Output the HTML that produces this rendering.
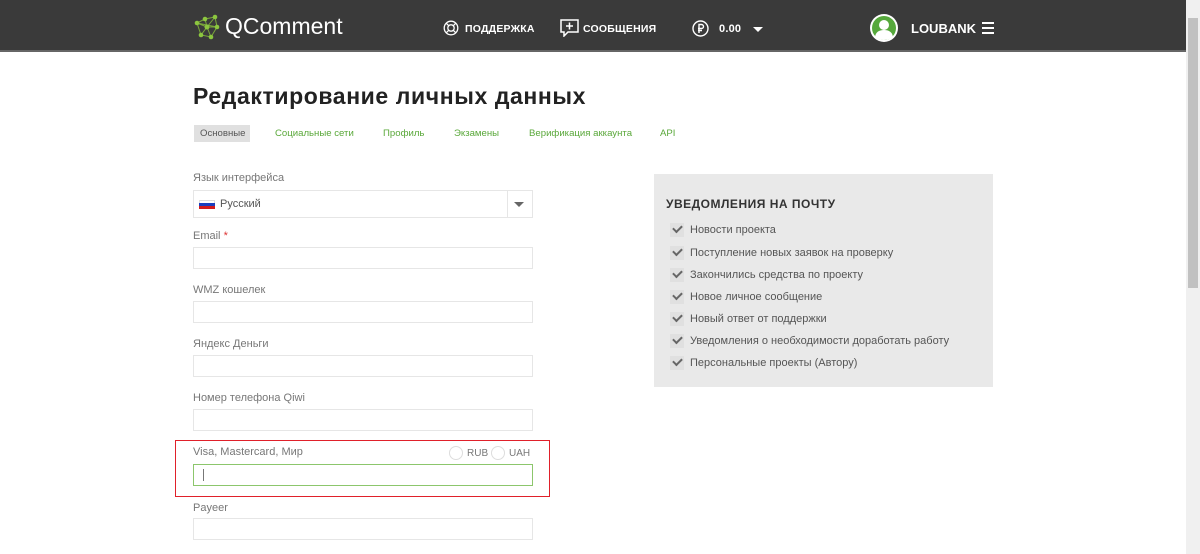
<!DOCTYPE html>
<html><head><meta charset="utf-8"><style>
*{box-sizing:border-box;margin:0;padding:0}
body{width:1200px;height:554px;overflow:hidden;background:#fff;font-family:"Liberation Sans","DejaVu Sans",sans-serif;position:relative}
.hdr{position:absolute;left:0;top:0;width:1186px;height:52px;background:#3a3a3a;border-bottom:2px solid #666}
.a{position:absolute}
.nav{color:#fff;font-weight:bold;font-size:11px;letter-spacing:.2px}
.lbl{position:absolute;left:193px;font-size:11px;color:#777}
.inp{position:absolute;left:193px;width:340px;height:22px;border:1px solid #e6e6e6;background:#fff}
.tab{position:absolute;top:128px;font-size:9.6px;color:#5aa83a}
.chk{position:absolute;left:670px;font-size:11px;color:#555}
.chk i{position:absolute;left:0;top:-1px;width:14px;height:14px;background:#e0e0e0}
.chk i:after{content:"";position:absolute;left:3px;top:2px;width:7px;height:4px;border-left:2px solid #666;border-bottom:2px solid #666;transform:rotate(-45deg)}
.chk span{position:absolute;left:20px;white-space:nowrap}
</style></head><body>
<div class="hdr"></div>
<svg class="a" style="left:193px;top:13px" width="28" height="28" viewBox="0 0 28 28"><g stroke="#7aa83a" stroke-width="1" fill="none"><path d="M4 10L12 6L22 4L24 14L18 24L8 22L4 10L14 14L22 4M12 6L14 14L18 24M8 22L14 14L24 14M4 10L24 14"/></g><g fill="#8cc63f"><circle cx="4" cy="10" r="2.3"/><circle cx="12" cy="6" r="2.3"/><circle cx="22" cy="4" r="2.3"/><circle cx="24" cy="14" r="2.3"/><circle cx="18" cy="24" r="2.3"/><circle cx="8" cy="22" r="2.3"/><circle cx="14" cy="14" r="2.5"/></g></svg>
<div class="a" style="left:225px;top:13px;color:#fff;font-size:23px">QComment</div>
<svg class="a" style="left:443px;top:20px" width="16" height="16" viewBox="0 0 16 16"><g fill="none" stroke="#fff" stroke-width="1.3"><circle cx="8" cy="8" r="6.8"/><circle cx="8" cy="8" r="3.2"/><path d="M3.2 3.2L5.7 5.7M12.8 3.2L10.3 5.7M3.2 12.8L5.7 10.3M12.8 12.8L10.3 10.3"/></g></svg>
<div class="a nav" style="left:465px;top:23px;font-size:10.5px">ПОДДЕРЖКА</div>
<svg class="a" style="left:560px;top:19px" width="19" height="18" viewBox="0 0 19 18"><path d="M1 1H18V13H8L4 17V13H1Z" fill="none" stroke="#fff" stroke-width="1.5"/><path d="M9.5 3.5V10.5M6 7H13" stroke="#fff" stroke-width="1.5"/></svg>
<div class="a nav" style="left:583px;top:23px;font-size:10.5px">СООБЩЕНИЯ</div>
<svg class="a" style="left:692px;top:20px" width="17" height="17" viewBox="0 0 17 17"><circle cx="8.5" cy="8.5" r="7.5" fill="none" stroke="#fff" stroke-width="1.4"/><path d="M7 13V4.5H9.5A2 2 0 0 1 9.5 8.5H6M6 10.5H10" fill="none" stroke="#fff" stroke-width="1.4"/></svg>
<div class="a nav" style="left:719px;top:23px">0.00</div>
<div class="a" style="left:753px;top:27px;width:0;height:0;border-left:5px solid transparent;border-right:5px solid transparent;border-top:5px solid #fff"></div>
<svg class="a" style="left:869px;top:13px" width="30" height="30" viewBox="0 0 30 30"><circle cx="15" cy="15" r="14" fill="#fff"/><circle cx="15" cy="15" r="12" fill="#56a83c"/><circle cx="15" cy="12" r="5" fill="#fff"/><path d="M6 24Q7 17 15 17Q23 17 24 24Q20 27 15 27Q10 27 6 24Z" fill="#fff"/></svg>
<div class="a" style="left:911px;top:21px;color:#fff;font-weight:bold;font-size:13px;letter-spacing:0">LOUBANK</div>
<div class="a" style="left:982px;top:22px;width:12px;height:12px;border-top:2px solid #fff;border-bottom:2px solid #fff"><div style="margin-top:3px;height:2px;background:#fff"></div></div>
<div class="a" style="left:1186px;top:0;width:14px;height:554px;background:#f0f0f0"></div>
<div class="a" style="left:1188px;top:18px;width:10px;height:270px;background:#c1c1c1"></div>
<div class="a" style="left:193px;top:83px;font-size:23px;font-weight:bold;color:#222;letter-spacing:.6px">Редактирование личных данных</div>
<div class="a" style="left:194px;top:125px;width:56px;height:17px;background:#e0e0e0"></div>
<div class="tab" style="left:200px;color:#555">Основные</div>
<div class="tab" style="left:275px">Социальные сети</div>
<div class="tab" style="left:383px">Профиль</div>
<div class="tab" style="left:454px">Экзамены</div>
<div class="tab" style="left:529px">Верификация аккаунта</div>
<div class="tab" style="left:660px">API</div>
<div class="lbl" style="top:172px">Язык интерфейса</div>
<div class="inp" style="top:190px;height:28px"></div>
<div class="a" style="left:507px;top:191px;width:1px;height:26px;background:#e6e6e6"></div>
<div class="a" style="left:514px;top:202px;border-left:5px solid transparent;border-right:5px solid transparent;border-top:5px solid #666"></div>
<div class="a" style="left:199px;top:200px;width:16px;height:3px;background:#fff;border:1px solid #ddd;border-bottom:0"></div>
<div class="a" style="left:199px;top:203px;width:16px;height:3px;background:#1a3fbf"></div>
<div class="a" style="left:199px;top:206px;width:16px;height:3px;background:#d21c1c"></div>
<div class="a" style="left:220px;top:198px;font-size:11px;color:#555">Русский</div>
<div class="lbl" style="top:230px">Email <span style="color:#d33">*</span></div>
<div class="inp" style="top:247px"></div>
<div class="lbl" style="top:284px">WMZ кошелек</div>
<div class="inp" style="top:301px"></div>
<div class="lbl" style="top:338px">Яндекс Деньги</div>
<div class="inp" style="top:355px"></div>
<div class="lbl" style="top:392px">Номер телефона Qiwi</div>
<div class="inp" style="top:409px"></div>
<div class="a" style="left:175px;top:440px;width:375px;height:57px;border:1px solid #e0202a"></div>
<div class="lbl" style="top:446px">Visa, Mastercard, Мир</div>
<div class="a" style="left:449px;top:446px;width:14px;height:14px;border:1px solid #ddd;border-radius:50%"></div>
<div class="a" style="left:467px;top:448px;font-size:10px;color:#777">RUB</div>
<div class="a" style="left:491px;top:446px;width:14px;height:14px;border:1px solid #ddd;border-radius:50%"></div>
<div class="a" style="left:509px;top:448px;font-size:10px;color:#777">UAH</div>
<div class="inp" style="top:464px;border-color:#8cc66c"></div>
<div class="a" style="left:203px;top:469px;width:1px;height:12px;background:#777"></div>
<div class="lbl" style="top:502px">Payeer</div>
<div class="inp" style="top:518px"></div>
<div class="a" style="left:654px;top:174px;width:339px;height:213px;background:#e9e9e9"></div>
<div class="a" style="left:666px;top:197px;font-size:12px;font-weight:bold;color:#333;letter-spacing:.5px">УВЕДОМЛЕНИЯ НА ПОЧТУ</div>
<div class="chk" style="top:224px"><i></i><span>Новости проекта</span></div>
<div class="chk" style="top:247px"><i></i><span>Поступление новых заявок на проверку</span></div>
<div class="chk" style="top:269px"><i></i><span>Закончились средства по проекту</span></div>
<div class="chk" style="top:291px"><i></i><span>Новое личное сообщение</span></div>
<div class="chk" style="top:313px"><i></i><span>Новый ответ от поддержки</span></div>
<div class="chk" style="top:335px"><i></i><span>Уведомления о необходимости доработать работу</span></div>
<div class="chk" style="top:357px"><i></i><span>Персональные проекты (Автору)</span></div>
</body></html>
